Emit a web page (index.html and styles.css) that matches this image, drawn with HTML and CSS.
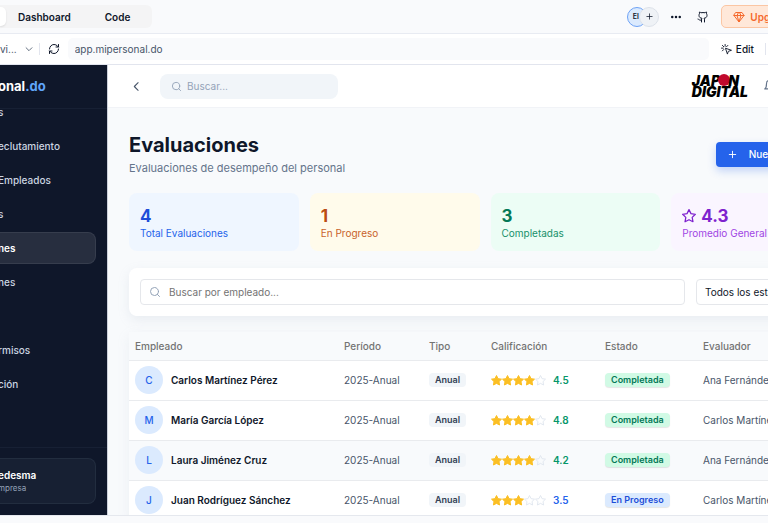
FILE: index.html
```
<!DOCTYPE html>
<html lang="es">
<head>
  <meta charset="UTF-8">
  <meta name="viewport" content="width=device-width, initial-scale=1.0">
  <title>Evaluaciones - mipersonal.do</title>
  <link rel="stylesheet" href="styles.css">
</head>
<body>

<svg class="sprite" aria-hidden="true">
  <symbol id="star" viewBox="1 1 22 22"><path d="M12 2l3.1 6.3 6.9 1-5 4.9 1.2 6.8-6.2-3.2L5.8 21 7 14.2 2 9.3l6.9-1z"/></symbol>
  <symbol id="search" viewBox="0 0 24 24"><circle cx="11" cy="11" r="8"/><path d="M21 21l-4.3-4.3"/></symbol>
  <symbol id="plus" viewBox="0 0 24 24"><path d="M5 12h14M12 5v14"/></symbol>
</svg>

<div class="tabbar">
  <div class="tabs">
    <button class="tab active" aria-label="Preview"></button>
    <button class="tab">Dashboard</button>
    <button class="tab">Code</button>
  </div>
  <div class="tabbar-actions">
    <div class="people">
      <span class="avatar-me">El</span>
      <button class="invite" aria-label="Invite"><svg class="icon"><use href="#plus"/></svg></button>
    </div>
    <div class="icon-group">
      <button class="icon-btn" aria-label="More">
        <svg class="icon dots" viewBox="0 0 24 24"><circle cx="3" cy="12" r="3"/><circle cx="12" cy="12" r="3"/><circle cx="21" cy="12" r="3"/></svg>
      </button>
      <button class="icon-btn" aria-label="GitHub">
        <svg class="icon" viewBox="0 0 24 24"><path d="M15 22v-4a4.800 4.800 0 0 0-1-3.500c3 0 6-2 6-5.500.08-1.250-.27-2.480-1-3.500.28-1.150.28-2.350 0-3.500 0 0-1 0-3 1.500-2.640-.5-5.360-.5-8 0C6 2 5 2 5 2c-.3 1.150-.3 2.350 0 3.500A5.400 5.400 0 0 0 4 9c0 3.500 3 5.500 6 5.500-.39.49-.68 1.050-.85 1.650-.17.6-.22 1.230-.15 1.850v4"/><path d="M9 18c-4.510 2-5-2-7-2"/></svg>
      </button>
    </div>
    <button class="upgrade">
      <svg class="icon" viewBox="0 0 24 24"><path d="M6 3h12l4 6-10 13L2 9z"/><path d="M11 3L8 9l4 13 4-13-3-6M2 9h20"/></svg>
      Upgrade
    </button>
  </div>
</div>

<div class="addressbar">
  <button class="page-picker">vi...
    <svg class="icon" viewBox="0 0 24 24"><path d="M5 9l7 7 7-7"/></svg>
  </button>
  <button class="reload" aria-label="Reload">
    <svg class="icon" viewBox="0 0 24 24"><path d="M3 12a9 9 0 0 1 9-9 9.750 9.750 0 0 1 6.740 2.740L21 8"/><path d="M21 3v5h-5"/><path d="M21 12a9 9 0 0 1-9 9 9.750 9.750 0 0 1-6.740-2.740L3 16"/><path d="M8 16H3v5"/></svg>
  </button>
  <input class="url" type="text" value="app.mipersonal.do" aria-label="Address">
  <button class="edit">
    <svg class="icon" viewBox="0 0 24 24"><path d="M10 10l4 12 2-6 6-2z"/><path d="M9 1v4M1 9h4M3 3l3 3M15 3l-3 3M3 15l3-3"/></svg>
    Edit
  </button>
</div>

<div class="app">
  <aside class="sidebar">
    <div class="brand">onal<span>.do</span></div>
    <nav class="menu">
      <a href="#">s</a>
      <a href="#">eclutamiento</a>
      <a href="#">Empleados</a>
      <a href="#">s</a>
      <a href="#" class="active">nes</a>
      <a href="#">nes</a>
      <a href="#" aria-label="Nómina"></a>
      <a href="#">rmisos</a>
      <a href="#">ción</a>
    </nav>
    <div class="user">
      <div class="user-card">
        <strong>edesma</strong>
        <small>mpresa</small>
      </div>
    </div>
  </aside>

  <div class="main">
    <header class="header">
      <button class="back" aria-label="Volver">
        <svg class="icon" viewBox="0 0 24 24"><path d="M15 5l-7 7 7 7"/></svg>
      </button>
      <label class="search">
        <svg class="icon"><use href="#search"/></svg>
        <input type="text" placeholder="Buscar..." aria-label="Buscar">
      </label>
      <div class="logo" aria-label="Japon Digital">
        <div class="logo-row">JAP<i class="sun"></i>N</div>
        <div class="logo-row">DIGITAL</div>
      </div>
      <button class="bell" aria-label="Notificaciones">
        <svg class="icon" viewBox="0 0 24 24"><path d="M6 8a6 6 0 0 1 12 0c0 7 3 9 3 9H3s3-2 3-9"/><path d="M10 21a2 2 0 0 0 4 0"/></svg>
      </button>
    </header>

    <main class="content">
      <div class="title-row">
        <div>
          <h1>Evaluaciones</h1>
          <p>Evaluaciones de desempeño del personal</p>
        </div>
        <button class="new-btn"><svg class="icon"><use href="#plus"/></svg>Nueva Evaluación</button>
      </div>

      <div class="stats">
        <div class="stat blue"><b>4</b><span>Total Evaluaciones</span></div>
        <div class="stat amber"><b>1</b><span>En Progreso</span></div>
        <div class="stat green"><b>3</b><span>Completadas</span></div>
        <div class="stat purple"><b><svg class="icon"><use href="#star"/></svg>4.3</b><span>Promedio General</span></div>
      </div>

      <div class="filters">
        <label class="filter-search">
          <svg class="icon"><use href="#search"/></svg>
          <input type="text" placeholder="Buscar por empleado..." aria-label="Buscar por empleado">
        </label>
        <select class="filter-state" aria-label="Estado">
          <option>Todos los estados</option>
        </select>
      </div>

      <table class="table">
        <thead>
          <tr>
            <th class="col-name">Empleado</th>
            <th class="col-period">Período</th>
            <th class="col-type">Tipo</th>
            <th class="col-score">Calificación</th>
            <th class="col-state">Estado</th>
            <th>Evaluador</th>
          </tr>
        </thead>
        <tbody id="rows"></tbody>
      </table>
    </main>
  </div>
</div>

<script>
  const evaluations = [
    { name: 'Carlos Martínez Pérez', score: 4.5, done: true, reviewer: 'Ana Fernández' },
    { name: 'María García López', score: 4.8, done: true, reviewer: 'Carlos Martínez' },
    { name: 'Laura Jiménez Cruz', score: 4.2, done: true, reviewer: 'Ana Fernández', hover: true },
    { name: 'Juan Rodríguez Sánchez', score: 3.5, done: false, reviewer: 'Carlos Martínez' }
  ];

  function stars(score) {
    let html = '';
    for (let i = 1; i <= 5; i++) {
      html += `<svg class="star ${i <= score ? 'on' : ''}"><use href="#star"/></svg>`;
    }
    return html;
  }

  document.getElementById('rows').innerHTML = evaluations.map(e => `
    <tr class="${e.hover ? 'hover' : ''}">
      <td><div class="person"><span class="avatar">${e.name[0]}</span>${e.name}</div></td>
      <td>2025-Anual</td>
      <td><span class="badge">Anual</span></td>
      <td><div class="score ${e.score >= 4 ? 'high' : 'mid'}">${stars(e.score)}<b>${e.score}</b></div></td>
      <td><span class="badge ${e.done ? 'done' : 'progress'}">${e.done ? 'Completada' : 'En Progreso'}</span></td>
      <td>${e.reviewer}</td>
    </tr>
  `).join('');
</script>

</body>
</html>
```
FILE: styles.css
```
* {
  box-sizing: border-box;
}
body {
  margin: 0;
  height: 100vh;
  display: flex;
  flex-direction: column;
  overflow: hidden;
  background: #f9fafc;
  font-family: Inter, "Liberation Sans", sans-serif;
  font-size: 10px;
  color: #0f172a;
}
button,
input,
select {
  font: inherit;
  color: inherit;
  border: 0;
  background: none;
  padding: 0;
  outline: 0;
}
button {
  white-space: nowrap;
}
.sprite {
  position: absolute;
  width: 0;
  height: 0;
}
.icon {
  width: 12px;
  height: 12px;
  flex: none;
  fill: none;
  stroke: currentColor;
  stroke-width: 2;
  stroke-linecap: round;
  stroke-linejoin: round;
}

/* editor bars */
.tabbar {
  flex: none;
  height: 34px;
  display: flex;
  align-items: center;
  justify-content: space-between;
  border-bottom: 1px solid #e8ebf2;
}
.tabs {
  display: flex;
  height: 23px;
  padding: 2px 0;
  background: #f4f4f5;
  border-radius: 0 6px 6px 0;
}
.tab {
  padding: 0 22px 0 12px;
  font-weight: 600;
}
.tab.active {
  width: 6px;
  padding: 0;
  background: #fff;
  border-radius: 0 5px 5px 0;
  box-shadow: 0 1px 2px rgba(0, 0, 0, 0.1);
}
.tabbar-actions {
  display: flex;
  align-items: center;
  gap: 12px;
  margin-right: -36px;
}
.people {
  display: flex;
}
.avatar-me,
.invite {
  width: 20px;
  height: 20px;
  border-radius: 50%;
  display: flex;
  align-items: center;
  justify-content: center;
}
.avatar-me {
  padding-right: 3px;
  background: #dbeafe;
  border: 1px solid #6ea2f5;
  font-size: 7px;
  font-weight: 600;
}
.invite {
  margin-left: -8px;
  background: #eff2f6;
  border: 1px solid #dde2ea;
}
.invite .icon {
  width: 9px;
  height: 9px;
}
.icon-group {
  display: flex;
  gap: 16px;
}
.icon-btn {
  display: flex;
}
.dots {
  width: 10px;
  fill: currentColor;
  stroke: none;
}
.upgrade {
  display: flex;
  align-items: center;
  gap: 5px;
  height: 23px;
  padding: 0 11px;
  border: 1px solid #fbc6a4;
  border-radius: 5px;
  background: #ffe8d9;
  color: #f5692c;
  font-weight: 600;
}
.addressbar {
  flex: none;
  height: 31px;
  display: flex;
  align-items: center;
  background: #fff;
  border-bottom: 1px solid #e2e5ee;
}
.page-picker {
  display: flex;
  align-items: center;
  gap: 7px;
  height: 12px;
  padding-right: 5px;
  border-right: 1px solid #e2e5ee;
  color: #475569;
}
.page-picker .icon {
  width: 10px;
}
.reload {
  display: flex;
  padding: 0 8px;
}
.url {
  flex: 1;
  height: 22px;
  padding: 0 7px;
  border-radius: 5px;
  background: #f9fafc;
  color: #475569;
}
.edit {
  display: flex;
  align-items: center;
  gap: 4px;
  height: 12px;
  margin: 0 2px 0 12px;
  padding-right: 11px;
  border-right: 1px solid #e2e5ee;
  font-weight: 500;
}
.edit .icon {
  width: 11px;
  height: 11px;
}

/* app */
.app {
  flex: 1;
  min-height: 0;
  display: flex;
  margin-bottom: 7px;
  border-bottom: 1px solid #e5e8ee;
}
.sidebar {
  flex: none;
  width: 108px;
  display: flex;
  flex-direction: column;
  overflow: hidden;
  background: #0f172a;
  border-right: 1px solid #cbd0da;
  text-indent: -2px;
}
.brand {
  flex: none;
  height: 44px;
  line-height: 43px;
  border-bottom: 1px solid #172034;
  color: #fff;
  font-size: 13px;
  font-weight: 700;
}
.brand span {
  color: #60a5fa;
}
.menu {
  flex: 1;
  min-height: 0;
  overflow: hidden;
  display: flex;
  flex-direction: column;
  gap: 2px;
}
.menu a {
  flex: none;
  height: 32px;
  line-height: 30px;
  margin-right: 11px;
  border: 1px solid transparent;
  border-left: 0;
  border-radius: 0 8px 8px 0;
  color: #cbd5e1;
  font-weight: 500;
  text-decoration: none;
}
.menu a:first-child {
  margin-top: -13px;
}
.menu a.active {
  background: #272e3f;
  border-color: #363d4d;
  color: #fff;
  font-weight: 600;
}
.user {
  flex: none;
  padding: 10px 11px 11px 0;
  border-top: 1px solid #172034;
}
.user-card {
  height: 46px;
  display: flex;
  flex-direction: column;
  justify-content: center;
  background: #172033;
  border: 1px solid #222d3f;
  border-left: 0;
  border-radius: 0 8px 8px 0;
}
.user-card strong {
  color: #fff;
  font-weight: 600;
  line-height: 13px;
}
.user-card small {
  color: #94a3b8;
  font-size: 8px;
  line-height: 12px;
}
/* the workspace runs past the right edge of the window */
.main {
  flex: 1;
  min-width: 0;
  min-height: 0;
  margin-right: -94px;
  display: flex;
  flex-direction: column;
  overflow: hidden;
  background: #f8fafc;
}
.header {
  flex: none;
  height: 43px;
  display: flex;
  align-items: center;
  padding: 0 85px 0 22px;
  background: #fff;
  border-bottom: 1px solid #f1f3f7;
}
.back {
  display: flex;
  color: #475569;
}
.back .icon {
  width: 13px;
  height: 13px;
}
.search {
  width: 178px;
  height: 25px;
  margin: 0 auto 0 17px;
  display: flex;
  align-items: center;
  gap: 5px;
  padding: 0 11px;
  border-radius: 8px;
  background: #f1f5f9;
  color: #94a3b8;
}
.search input {
  flex: 1;
  min-width: 0;
}
.search .icon {
  width: 11px;
  height: 11px;
}
input::placeholder {
  color: inherit;
  opacity: 1;
}
.logo {
  color: #000;
  font-size: 14px;
  font-weight: 900;
  font-style: italic;
  line-height: 11px;
}
.logo-row {
  display: flex;
  align-items: center;
}
.sun {
  width: 12px;
  height: 12px;
  margin: -1px -2px 0;
  border-radius: 50%;
  background: #c1082c;
}
.bell {
  display: flex;
  margin-left: 15px;
  color: #64748b;
}
.bell .icon {
  width: 14px;
  height: 14px;
}
.content {
  padding: 24px 21px;
}
.title-row {
  display: flex;
  align-items: center;
  justify-content: space-between;
}
h1 {
  margin: 0;
  font-size: 20px;
  line-height: 26px;
  font-weight: 700;
}
.title-row p {
  margin: 2px 0 0;
  color: #64748b;
  font-size: 11px;
  line-height: 16px;
}
.new-btn {
  display: flex;
  align-items: center;
  gap: 11px;
  height: 25px;
  padding: 0 7px 0 11px;
  border-radius: 4px;
  background: #2563eb;
  box-shadow: 0 4px 9px rgba(37, 99, 235, 0.25);
  color: #fff;
  font-weight: 500;
}
.new-btn .icon {
  width: 11px;
  height: 11px;
}
.stats {
  display: grid;
  grid-template-columns: repeat(4, 1fr);
  gap: 11px;
  margin-top: 17px;
}
.stat {
  padding: 13px 11px 11px;
  border-radius: 8px;
}
.stat b {
  display: flex;
  align-items: center;
  gap: 5px;
  font-size: 17px;
  line-height: 20px;
}
.stat span {
  display: block;
  line-height: 14px;
}
.stat .icon {
  width: 14px;
  height: 14px;
}
.blue { background: #eff6ff; color: #1d4ed8; }
.blue span { color: #2563eb; }
.amber { background: #fffbeb; color: #bb4d12; }
.amber span { color: #c8622a; }
.green { background: #ecfdf5; color: #047857; }
.green span { color: #17916a; }
.purple { background: #faf5ff; color: #7e22ce; }
.purple span { color: #9f46e4; }
.filters {
  display: flex;
  gap: 11px;
  margin-top: 17px;
  padding: 11px;
  border-radius: 8px;
  background: #fff;
  box-shadow: 0 4px 12px rgba(148, 163, 184, 0.15);
}
.filter-search,
.filter-state {
  height: 26px;
  border: 1px solid #e5e7eb;
  border-radius: 4px;
}
.filter-search {
  flex: 1;
  display: flex;
  align-items: center;
  gap: 8px;
  padding: 0 8px;
  color: #737373;
}
.filter-search .icon {
  color: #94a3b8;
}
.filter-search input {
  flex: 1;
}
.filter-state {
  width: 134px;
  padding: 0 8px;
  appearance: none;
}
.table {
  width: 100%;
  margin-top: 16px;
  table-layout: fixed;
  border-collapse: collapse;
  background: #fff;
  box-shadow: 0 4px 12px rgba(148, 163, 184, 0.12);
}
.table th,
.table td {
  padding: 0 6px;
  text-align: left;
  white-space: nowrap;
  border-bottom: 1px solid #e9ebee;
}
.table th {
  height: 28px;
  background: #f8fafc;
  color: #737373;
  font-weight: 500;
}
.table td {
  height: 40px;
  color: #475569;
}
.hover {
  background: #f8fafc;
}
.col-name { width: 209px; }
.col-period { width: 85px; }
.col-type { width: 62px; }
.col-score { width: 114px; }
.col-state { width: 98px; }
.person {
  display: flex;
  align-items: center;
  gap: 8px;
  color: #0f172a;
  font-weight: 600;
}
.avatar {
  width: 28px;
  height: 28px;
  line-height: 28px;
  border-radius: 50%;
  background: #dbeafe;
  color: #2563eb;
  font-weight: 500;
  text-align: center;
}
.badge {
  display: inline-block;
  padding: 0 6px;
  border-radius: 4px;
  background: #f1f5f9;
  color: #334155;
  font-size: 9px;
  font-weight: 600;
  line-height: 14px;
}
.badge.done {
  background: #d1fae5;
  color: #047857;
  box-shadow: 0 1px 1px rgba(0, 0, 0, 0.1);
}
.badge.progress {
  background: #dbeafe;
  color: #1d4ed8;
  box-shadow: 0 1px 1px rgba(0, 0, 0, 0.1);
}
.score {
  display: flex;
  align-items: center;
}
.score b {
  margin-left: 7px;
  font-weight: 600;
}
.high { color: #059669; }
.mid { color: #2563eb; }
.star {
  width: 11px;
  height: 11px;
  fill: none;
  stroke: #e2e8f0;
  stroke-width: 2;
  stroke-linejoin: round;
}
.star.on {
  fill: #fbbf24;
  stroke: #fbbf24;
}
```
